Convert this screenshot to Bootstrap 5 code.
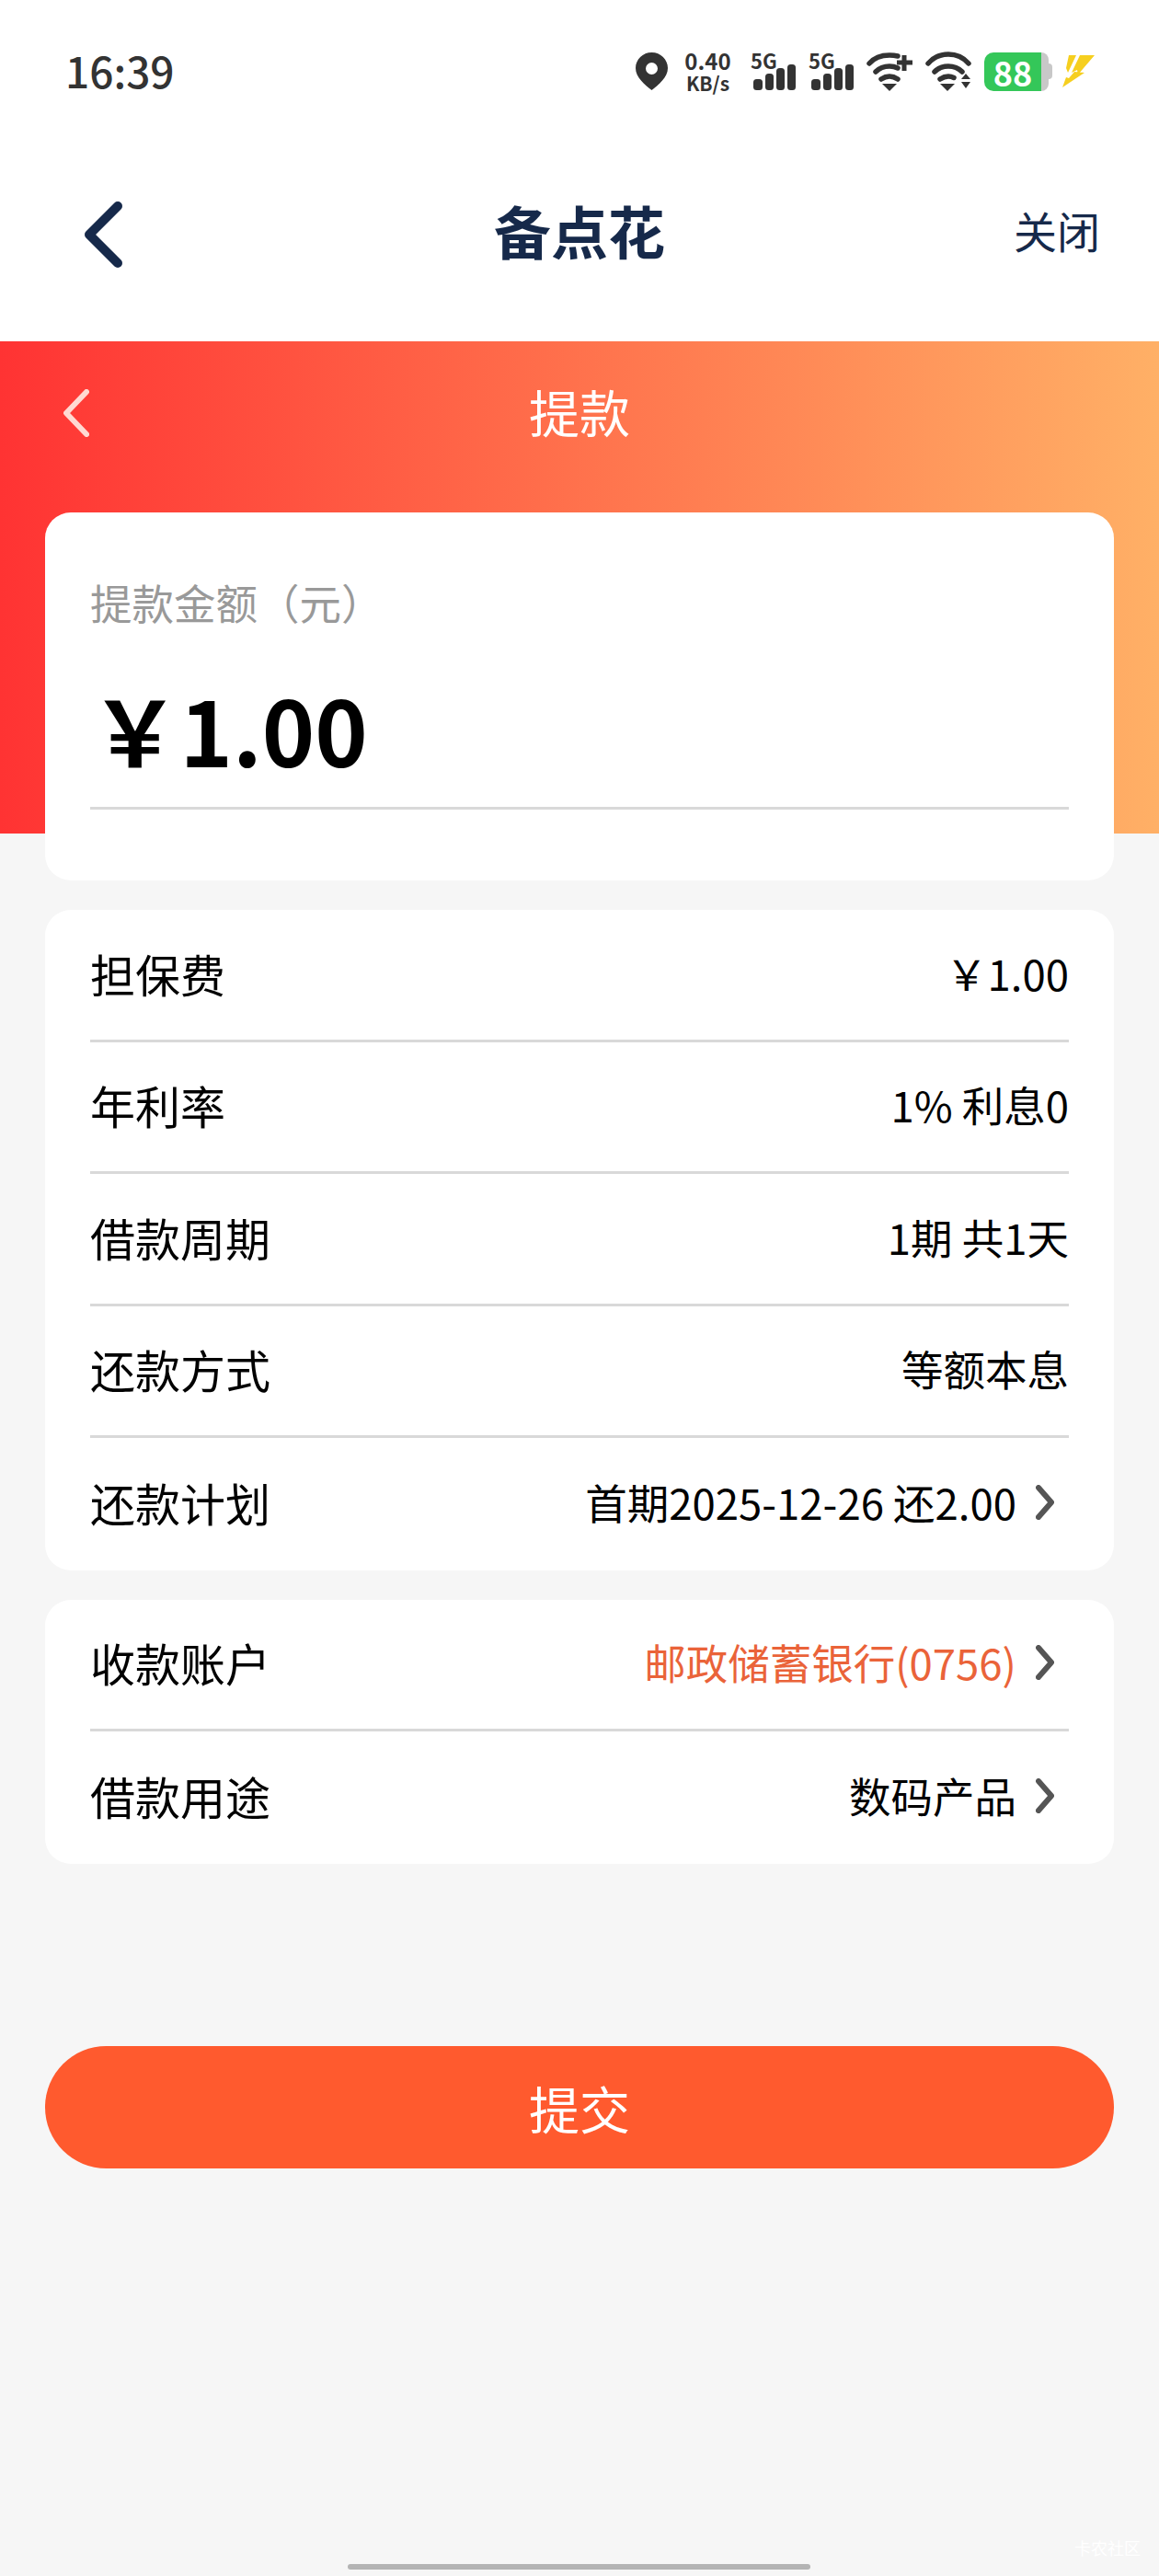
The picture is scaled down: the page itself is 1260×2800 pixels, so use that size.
<!DOCTYPE html>
<html lang="zh-CN">
  <head>
    <meta charset="UTF-8" />
    <meta name="viewport" content="width=device-width, initial-scale=1.0" />
    <title>提款</title>
    <link
      href="https://cdn.jsdelivr.net/npm/bootstrap@5.3.2/dist/css/bootstrap.min.css"
      rel="stylesheet"
    />
    <style>
      body {
        background-color: #f6f6f6;
        font-family: "Noto Sans CJK SC", "Noto Sans", sans-serif;
        color: #000;
      }
      .phone {
        width: 1260px;
        height: 2800px;
        position: relative;
        overflow: hidden;
      }
      .status-bar {
        height: 155px;
        background: #fff;
        padding: 0 70px 0 71px;
        color: #333;
      }
      .status-time {
        font-size: 46px;
        line-height: 1;
        font-weight: 500;
        margin-top: -4px;
      }
      .status-icons {
        gap: 14px;
      }
      .net-speed {
        width: 53px;
        font-weight: 700;
        text-align: center;
        margin-left: 3px;
        margin-right: 6px;
      }
      .net-num {
        display: block;
        font-size: 24px;
        line-height: 24px;
      }
      .net-unit {
        display: block;
        font-size: 21px;
        line-height: 24px;
      }
      .sim-signal {
        width: 49px;
        height: 41px;
        position: relative;
      }
      .sim-label {
        position: absolute;
        left: 0;
        top: 0;
        font-size: 22px;
        line-height: 17px;
        font-weight: 700;
      }
      .battery {
        height: 42px;
        margin-right: -3px;
      }
      .battery-fill {
        width: 62px;
        height: 42px;
        background: #34c759;
        color: #fff;
        border-radius: 10px 0 0 10px;
        font-size: 36px;
        line-height: 42px;
        font-weight: 700;
        text-align: center;
      }
      .battery-rest {
        width: 8px;
        height: 42px;
        background: #c8c8c8;
        border-radius: 0 8px 8px 0;
      }
      .battery-nub {
        width: 4px;
        height: 17px;
        background: #c8c8c8;
        border-radius: 0 4px 4px 0;
      }
      .top-nav {
        height: 216px;
        background: #fff;
        padding: 0 64px 16px 92px;
        position: relative;
      }
      .top-title {
        font-size: 62px;
        font-weight: 700;
        color: #16294a;
        line-height: 1;
        position: absolute;
        left: 0;
        right: 0;
        top: 64px;
        text-align: center;
      }
      .top-close {
        font-size: 47px;
        line-height: 1;
        color: #16294a;
        margin-bottom: 11px;
      }
      .hero {
        height: 535px;
        padding: 0 49px;
        background: linear-gradient(90deg, #ff3333 0%, #ffb066 100%);
      }
      .hero-bar {
        height: 186px;
        position: relative;
      }
      .hero-title {
        font-size: 55px;
        line-height: 1;
        color: #fff;
        text-align: center;
        padding-top: 48px;
      }
      .hero-back {
        position: absolute;
        left: 20px;
        top: 52px;
      }
      .panel {
        background: #fff;
        border-radius: 28px;
        margin: 0 49px 32px;
        padding: 0 49px;
      }
      .amount-panel {
        margin: 0;
        height: 400px;
        padding-top: 69px;
      }
      .amount-label {
        font-size: 45.5px;
        line-height: 56px;
        color: #999;
      }
      .amount-value {
        font-size: 97.5px;
        line-height: 120px;
        font-weight: 700;
        margin-top: 50px;
        height: 148px;
        border-bottom: 3px solid #d9d9d9;
      }
      .gap-under-hero {
        height: 83px;
      }
      .info-row {
        height: 143.5px;
        padding-bottom: 4px;
        font-size: 49px;
        line-height: 1;
        border-bottom: 3px solid #d9d9d9;
      }
      .info-row:last-child {
        border-bottom: 0;
      }
      .info-value {
        font-size: 45.5px;
      }
      .info-value.bank {
        color: #ea6339;
      }
      .chev {
        margin-left: 21px;
        margin-right: 16px;
      }
      .submit-btn {
        display: block;
        width: 1162px;
        height: 133px;
        margin: 198px 49px 0;
        border: 0;
        border-radius: 67px;
        background: #ff5a2e;
        color: #fff;
        font-size: 55px;
        line-height: 1;
      }
      .home-bar {
        position: absolute;
        left: 378px;
        bottom: 7px;
        width: 503px;
        height: 6px;
        border-radius: 3px;
        background: #b4b4b4;
      }
      .watermark {
        position: absolute;
        right: 20px;
        bottom: 22px;
        font-size: 18px;
        line-height: 1;
        color: #fff;
      }
    </style>
  </head>
  <body>
    <div class="phone">
      <div class="status-bar d-flex justify-content-between align-items-center">
        <div class="status-time">16:39</div>
        <div class="status-icons d-flex align-items-center">
          <!-- location pin -->
          <svg width="35" height="41" viewBox="0 0 35 41">
            <path fill="#333" fill-rule="evenodd" d="M17.5 0C7.800 0 0 7.600 0 17c0 10 10 18 17.500 24C25 35 35 27 35 17 35 7.600 27.200 0 17.500 0Zm0 11a6.500 6.500 0 1 1 0 13 6.500 6.500 0 0 1 0-13Z" />
          </svg>
          <div class="net-speed"><span class="net-num">0.40</span><span class="net-unit">KB/s</span></div>
          <div class="sim-signal">
            <span class="sim-label">5G</span>
            <svg class="d-block" width="49" height="41" viewBox="0 0 49 41">
              <rect x="3" y="29" width="10" height="12" rx="3.500" fill="#333" />
              <rect x="16" y="23" width="9" height="18" rx="3.500" fill="#333" />
              <rect x="28" y="17" width="9" height="24" rx="3.500" fill="#333" />
              <rect x="40" y="13" width="9" height="28" rx="3.500" fill="#333" />
            </svg>
          </div>
          <div class="sim-signal">
            <span class="sim-label">5G</span>
            <svg class="d-block" width="49" height="41" viewBox="0 0 49 41">
              <rect x="3" y="29" width="10" height="12" rx="3.500" fill="#333" />
              <rect x="16" y="23" width="9" height="18" rx="3.500" fill="#333" />
              <rect x="28" y="17" width="9" height="24" rx="3.500" fill="#333" />
              <rect x="40" y="13" width="9" height="28" rx="3.500" fill="#333" />
            </svg>
          </div>
          <!-- wifi with plus -->
          <svg width="50" height="43" viewBox="0 0 50 43">
            <g fill="none" stroke="#333" stroke-width="5.500" stroke-linecap="round">
              <path d="M3 13C9 6 17 4 25 4c4 0 7 .5 9 1" />
              <path d="M10 22c4-4 9-6 15-6 3 0 6 .5 9 2" />
              <path d="M16 30c3-2 6-3 9-3s6 1 9 3" />
            </g>
            <path fill="#333" d="M17 35h16l-8 8Z" />
            <path fill="none" stroke="#333" stroke-width="5" d="M41 4v17M33 12h17" />
          </svg>
          <!-- wifi with up/down arrows -->
          <svg width="50" height="43" viewBox="0 0 50 43">
            <g fill="none" stroke="#333" stroke-width="5.500" stroke-linecap="round">
              <path d="M3 13C9 6 17 3 25 3s16 3 22 10" />
              <path d="M10 22c4-4 9-6 15-6s11 2 15 6" />
              <path d="M16 30c3-2 6-3 9-3 2 0 4 .5 6 1.500" />
            </g>
            <path fill="#333" d="M16 35h16l-8 8ZM39 30h10l-5-6ZM39 33h10l-5 7Z" />
          </svg>
          <div class="battery d-flex align-items-center">
            <div class="battery-fill">88</div>
            <div class="battery-rest"></div>
            <div class="battery-nub"></div>
          </div>
          <svg width="35" height="37" viewBox="0 0 35 37">
            <path fill="#f6cf1f" d="M7 1h8L6 20l-2-5ZM19 1h16L17 22l-1-5-6 3ZM13 19l11 1L0 36l4-11 3 1Z" />
          </svg>
        </div>
      </div>

      <div class="top-nav d-flex justify-content-between align-items-center">
        <svg width="42" height="72" viewBox="0 0 42 72">
          <path fill="none" stroke="#16294a" stroke-width="10" stroke-linecap="round" stroke-linejoin="round" d="M36 5 5 36l31 31" />
        </svg>
        <div class="top-title">备点花</div>
        <div class="top-close">关闭</div>
      </div>

      <div class="hero">
        <div class="hero-bar">
          <svg class="hero-back" width="28" height="52" viewBox="0 0 28 52">
            <path fill="none" stroke="#ffd9d2" stroke-width="6" stroke-linecap="round" stroke-linejoin="round" d="M25 3 3 26l22 23" />
          </svg>
          <div class="hero-title">提款</div>
        </div>
        <div class="panel amount-panel">
          <div class="amount-label">提款金额（元）</div>
          <div class="amount-value">￥1.00</div>
        </div>
      </div>
      <div class="gap-under-hero"></div>

      <div class="panel">
        <div class="info-row d-flex justify-content-between align-items-center">
          <span>担保费</span><span class="info-value">￥1.00</span>
        </div>
        <div class="info-row d-flex justify-content-between align-items-center">
          <span>年利率</span><span class="info-value">1% 利息0</span>
        </div>
        <div class="info-row d-flex justify-content-between align-items-center">
          <span>借款周期</span><span class="info-value">1期 共1天</span>
        </div>
        <div class="info-row d-flex justify-content-between align-items-center">
          <span>还款方式</span><span class="info-value">等额本息</span>
        </div>
        <div class="info-row d-flex justify-content-between align-items-center">
          <span>还款计划</span>
          <span class="d-flex align-items-center">
            <span class="info-value">首期2025-12-26 还2.00</span>
            <svg class="chev" width="20" height="38" viewBox="0 0 20 38">
              <path fill="none" stroke="#555" stroke-width="6" stroke-linecap="round" stroke-linejoin="round" d="M3 3l14 16L3 35" />
            </svg>
          </span>
        </div>
      </div>

      <div class="panel">
        <div class="info-row d-flex justify-content-between align-items-center">
          <span>收款账户</span>
          <span class="d-flex align-items-center">
            <span class="info-value bank">邮政储蓄银行(0756)</span>
            <svg class="chev" width="20" height="38" viewBox="0 0 20 38">
              <path fill="none" stroke="#555" stroke-width="6" stroke-linecap="round" stroke-linejoin="round" d="M3 3l14 16L3 35" />
            </svg>
          </span>
        </div>
        <div class="info-row d-flex justify-content-between align-items-center">
          <span>借款用途</span>
          <span class="d-flex align-items-center">
            <span class="info-value">数码产品</span>
            <svg class="chev" width="20" height="38" viewBox="0 0 20 38">
              <path fill="none" stroke="#555" stroke-width="6" stroke-linecap="round" stroke-linejoin="round" d="M3 3l14 16L3 35" />
            </svg>
          </span>
        </div>
      </div>

      <button type="button" class="btn submit-btn">提交</button>

      <div class="home-bar"></div>
      <div class="watermark">卡农社区</div>
    </div>

    <script src="https://cdn.jsdelivr.net/npm/bootstrap@5.3.2/dist/js/bootstrap.bundle.min.js"></script>
  </body>
</html>
